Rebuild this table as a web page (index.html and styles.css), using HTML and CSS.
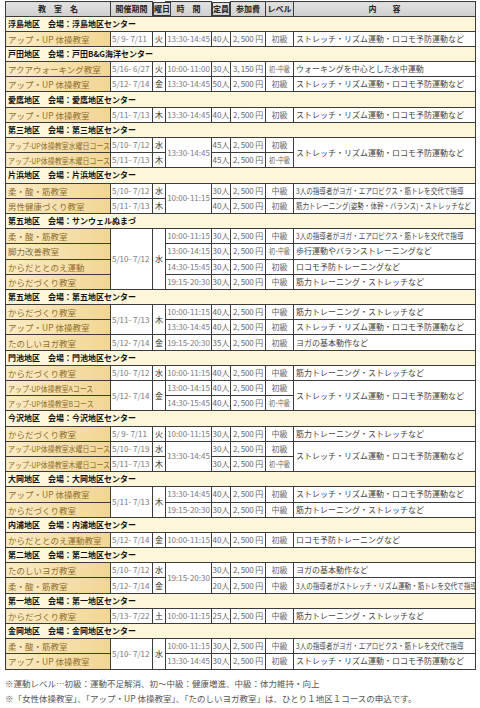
FILE: index.html
```html
<!DOCTYPE html>
<html lang="ja">
<head>
<meta charset="utf-8">
<title>教室一覧</title>
<link rel="stylesheet" href="styles.css">
</head>
<body>
<div class="wrap">
<table class="schedule">
<colgroup>
<col class="c-name"><col class="c-period"><col class="c-day"><col class="c-time"><col class="c-cap"><col class="c-fee"><col class="c-level"><col class="c-desc">
</colgroup>
<thead>
<tr class="head">
<th>教　室　名</th><th>開催期間</th><th class="sq">曜日</th><th>時　間</th><th class="sq">定員</th><th>参加費</th><th>レベル</th><th>内　　容</th>
</tr>
</thead>
<tbody>
<tr class="area"><td colspan="8">浮島地区　会場：浮島地区センター</td></tr>
<tr><td class="name">アップ・UP 体操教室</td><td class="period">5/ 9- 7/11</td><td class="day">火</td><td class="time">13:30-14:45</td><td class="cap">40人</td><td class="fee">2, 500 円</td><td class="level">初級</td><td class="desc">ストレッチ・リズム運動・ロコモ予防運動など</td></tr>

<tr class="area"><td colspan="8">戸田地区　会場：戸田B&amp;G海洋センター</td></tr>
<tr><td class="name">アクアウォーキング教室</td><td class="period">5/16- 6/27</td><td class="day">火</td><td class="time">10:00-11:00</td><td class="cap">30人</td><td class="fee">3, 150 円</td><td class="level"><span class="sq">初~中級</span></td><td class="desc">ウォーキングを中心とした水中運動</td></tr>
<tr><td class="name">アップ・UP 体操教室</td><td class="period">5/12- 7/14</td><td class="day">金</td><td class="time">13:30-14:45</td><td class="cap">50人</td><td class="fee">2, 500 円</td><td class="level">初級</td><td class="desc">ストレッチ・リズム運動・ロコモ予防運動など</td></tr>

<tr class="area"><td colspan="8">愛鷹地区　会場：愛鷹地区センター</td></tr>
<tr><td class="name">アップ・UP 体操教室</td><td class="period">5/11- 7/13</td><td class="day">木</td><td class="time">13:30-14:45</td><td class="cap">40人</td><td class="fee">2, 500 円</td><td class="level">初級</td><td class="desc">ストレッチ・リズム運動・ロコモ予防運動など</td></tr>

<tr class="area"><td colspan="8">第三地区　会場：第三地区センター</td></tr>
<tr><td class="name"><span class="sq">アップ-UP体操教室水曜日コース</span></td><td class="period">5/10- 7/12</td><td class="day">水</td><td class="time" rowspan="2">13:30-14:45</td><td class="cap">45人</td><td class="fee">2, 500 円</td><td class="level">初級</td><td class="desc" rowspan="2">ストレッチ・リズム運動・ロコモ予防運動など</td></tr>
<tr><td class="name"><span class="sq">アップ-UP体操教室木曜日コース</span></td><td class="period">5/11- 7/13</td><td class="day">木</td><td class="cap">45人</td><td class="fee">2, 500 円</td><td class="level"><span class="sq">初~中級</span></td></tr>

<tr class="area"><td colspan="8">片浜地区　会場：片浜地区センター</td></tr>
<tr><td class="name">柔・酸・筋教室</td><td class="period">5/10- 7/12</td><td class="day">水</td><td class="time" rowspan="2">10:00-11:15</td><td class="cap">30人</td><td class="fee">2, 500 円</td><td class="level">中級</td><td class="desc"><span class="sq">3人の指導者がヨガ・エアロビクス・筋トレを交代で指導</span></td></tr>
<tr><td class="name">男性健康づくり教室</td><td class="period">5/11- 7/13</td><td class="day">木</td><td class="cap">40人</td><td class="fee">2, 500 円</td><td class="level">初級</td><td class="desc"><span class="sq">筋力トレーニング(姿勢・体幹・バランス)・ストレッチなど</span></td></tr>

<tr class="area"><td colspan="8">第五地区　会場：サンウェルぬまづ</td></tr>
<tr><td class="name">柔・酸・筋教室</td><td class="period" rowspan="4">5/10- 7/12</td><td class="day" rowspan="4">水</td><td class="time">10:00-11:15</td><td class="cap">30人</td><td class="fee">2, 500 円</td><td class="level">中級</td><td class="desc"><span class="sq">3人の指導者がヨガ・エアロビクス・筋トレを交代で指導</span></td></tr>
<tr><td class="name">脚力改善教室</td><td class="time">13:00-14:15</td><td class="cap">30人</td><td class="fee">2, 500 円</td><td class="level"><span class="sq">初~中級</span></td><td class="desc">歩行運動やバランストレーニングなど</td></tr>
<tr><td class="name">からだととのえ運動</td><td class="time">14:30-15:45</td><td class="cap">30人</td><td class="fee">2, 500 円</td><td class="level">初級</td><td class="desc">ロコモ予防トレーニングなど</td></tr>
<tr><td class="name">からだづくり教室</td><td class="time">19:15-20:30</td><td class="cap">30人</td><td class="fee">2, 500 円</td><td class="level">中級</td><td class="desc">筋力トレーニング・ストレッチなど</td></tr>

<tr class="area"><td colspan="8">第五地区　会場：第五地区センター</td></tr>
<tr><td class="name">からだづくり教室</td><td class="period" rowspan="2">5/11- 7/13</td><td class="day" rowspan="2">木</td><td class="time">10:00-11:15</td><td class="cap">40人</td><td class="fee">2, 500 円</td><td class="level">中級</td><td class="desc">筋力トレーニング・ストレッチなど</td></tr>
<tr><td class="name">アップ・UP 体操教室</td><td class="time">13:30-14:45</td><td class="cap">40人</td><td class="fee">2, 500 円</td><td class="level">初級</td><td class="desc">ストレッチ・リズム運動・ロコモ予防運動など</td></tr>
<tr><td class="name">たのしいヨガ教室</td><td class="period">5/12- 7/14</td><td class="day">金</td><td class="time">19:15-20:30</td><td class="cap">35人</td><td class="fee">2, 500 円</td><td class="level">初級</td><td class="desc">ヨガの基本動作など</td></tr>

<tr class="area"><td colspan="8">門池地区　会場：門池地区センター</td></tr>
<tr><td class="name">からだづくり教室</td><td class="period">5/10- 7/12</td><td class="day">水</td><td class="time">10:00-11:15</td><td class="cap">40人</td><td class="fee">2, 500 円</td><td class="level">中級</td><td class="desc">筋力トレーニング・ストレッチなど</td></tr>
<tr><td class="name"><span class="sq">アップ-UP体操教室Aコース</span></td><td class="period" rowspan="2">5/12- 7/14</td><td class="day" rowspan="2">金</td><td class="time">13:00-14:15</td><td class="cap">40人</td><td class="fee">2, 500 円</td><td class="level">初級</td><td class="desc" rowspan="2">ストレッチ・リズム運動・ロコモ予防運動など</td></tr>
<tr><td class="name"><span class="sq">アップ-UP体操教室Bコース</span></td><td class="time">14:30-15:45</td><td class="cap">40人</td><td class="fee">2, 500 円</td><td class="level"><span class="sq">初~中級</span></td></tr>

<tr class="area"><td colspan="8">今沢地区　会場：今沢地区センター</td></tr>
<tr><td class="name">からだづくり教室</td><td class="period">5/ 9- 7/11</td><td class="day">火</td><td class="time">10:00-11:15</td><td class="cap">30人</td><td class="fee">2, 500 円</td><td class="level">中級</td><td class="desc">筋力トレーニング・ストレッチなど</td></tr>
<tr><td class="name"><span class="sq">アップ-UP体操教室水曜日コース</span></td><td class="period">5/10- 7/19</td><td class="day">水</td><td class="time" rowspan="2">13:30-14:45</td><td class="cap">30人</td><td class="fee">2, 500 円</td><td class="level">初級</td><td class="desc" rowspan="2">ストレッチ・リズム運動・ロコモ予防運動など</td></tr>
<tr><td class="name"><span class="sq">アップ-UP体操教室木曜日コース</span></td><td class="period">5/11- 7/13</td><td class="day">木</td><td class="cap">30人</td><td class="fee">2, 500 円</td><td class="level"><span class="sq">初~中級</span></td></tr>

<tr class="area"><td colspan="8">大岡地区　会場：大岡地区センター</td></tr>
<tr><td class="name">アップ・UP 体操教室</td><td class="period" rowspan="2">5/11- 7/13</td><td class="day" rowspan="2">木</td><td class="time">13:30-14:45</td><td class="cap">40人</td><td class="fee">2, 500 円</td><td class="level">初級</td><td class="desc">ストレッチ・リズム運動・ロコモ予防運動など</td></tr>
<tr><td class="name">からだづくり教室</td><td class="time">19:15-20:30</td><td class="cap">30人</td><td class="fee">2, 500 円</td><td class="level">中級</td><td class="desc">筋力トレーニング・ストレッチなど</td></tr>

<tr class="area"><td colspan="8">内浦地区　会場：内浦地区センター</td></tr>
<tr><td class="name">からだととのえ運動教室</td><td class="period">5/12- 7/14</td><td class="day">金</td><td class="time">10:00-11:15</td><td class="cap">40人</td><td class="fee">2, 500 円</td><td class="level">初級</td><td class="desc">ロコモ予防トレーニングなど</td></tr>

<tr class="area"><td colspan="8">第二地区　会場：第二地区センター</td></tr>
<tr><td class="name">たのしいヨガ教室</td><td class="period">5/10- 7/12</td><td class="day">水</td><td class="time" rowspan="2">19:15-20:30</td><td class="cap">30人</td><td class="fee">2, 500 円</td><td class="level">初級</td><td class="desc">ヨガの基本動作など</td></tr>
<tr><td class="name">柔・酸・筋教室</td><td class="period">5/12- 7/14</td><td class="day">金</td><td class="cap">20人</td><td class="fee">2, 500 円</td><td class="level">中級</td><td class="desc"><span class="sq">3人の指導者がストレッチ・リズム運動・筋トレを交代で指導</span></td></tr>

<tr class="area"><td colspan="8">第一地区　会場：第一地区センター</td></tr>
<tr><td class="name">からだづくり教室</td><td class="period">5/13- 7/22</td><td class="day">土</td><td class="time">10:00-11:15</td><td class="cap">25人</td><td class="fee">2, 500 円</td><td class="level">中級</td><td class="desc">筋力トレーニング・ストレッチなど</td></tr>

<tr class="area"><td colspan="8">金岡地区　会場：金岡地区センター</td></tr>
<tr><td class="name">柔・酸・筋教室</td><td class="period" rowspan="2">5/10- 7/12</td><td class="day" rowspan="2">水</td><td class="time">10:00-11:15</td><td class="cap">30人</td><td class="fee">2, 500 円</td><td class="level">中級</td><td class="desc"><span class="sq">3人の指導者がヨガ・エアロビクス・筋トレを交代で指導</span></td></tr>
<tr><td class="name">アップ・UP 体操教室</td><td class="time">13:30-14:45</td><td class="cap">30人</td><td class="fee">2, 500 円</td><td class="level">初級</td><td class="desc">ストレッチ・リズム運動・ロコモ予防運動など</td></tr>
</tbody>
</table>
<div class="notes">
<p>※運動レベル…初級：運動不足解消、初～中級：健康増進、中級：体力維持・向上</p>
<p>※「女性体操教室」、「アップ・UP 体操教室」、「たのしいヨガ教室」は、ひとり１地区１コースの申込です。</p>
</div>
</div>
</body>
</html>
```
FILE: styles.css
```css
html, body {
  margin: 0;
  padding: 0;
  background: #ffffff;
}
body {
  font-family: "Noto Sans CJK JP", "Noto Sans", sans-serif;
}
.wrap {
  padding: 1px 5px 0 5px;
}
.schedule {
  border-collapse: collapse;
  table-layout: fixed;
  width: 470px;
  font-size: 8px;
}
.c-name { width: 105px; }
.c-period { width: 42px; }
.c-day { width: 13px; }
.c-time { width: 46px; }
.c-cap { width: 19px; }
.c-fee { width: 35px; }
.c-level { width: 28px; }
.c-desc { width: 182px; }

.schedule th,
.schedule td {
  border: 1px solid #3c3c3c;
  padding: 0 2px;
  white-space: nowrap;
  overflow: hidden;
  line-height: 12px;
  vertical-align: middle;
}
.schedule tbody tr {
  height: 15.2px;
}
.head th {
  height: 12px;
  background: linear-gradient(#e2e2e2, #cfcfcf);
  color: #222;
  font-weight: bold;
  text-align: center;
  padding: 0;
}
.area td {
  background: #fdf6da;
  color: #111;
  font-weight: bold;
  padding-left: 2px;
}
.name {
  background: linear-gradient(to right, #fbebc6, #f1d593);
  color: #8f6f2e;
  font-size: 8.5px;
}
.period {
  color: #7a7a7a;
  padding: 0 1px !important;
}
.day {
  color: #333;
  text-align: center;
  padding: 0 !important;
}
.time {
  color: #7a7a7a;
  text-align: center;
  padding: 0 1px !important;
}
.cap {
  color: #666;
  text-align: center;
  padding: 0 !important;
}
.fee {
  color: #666;
  text-align: center;
  padding: 0 !important;
  letter-spacing: -0.2px;
}
.level {
  color: #666;
  text-align: center;
  padding: 0 !important;
}
.desc {
  color: #444;
  padding-left: 2px;
}
.sq {
  display: inline-block;
  transform: scaleX(0.84);
  transform-origin: left center;
}
.name .sq {
  font-size: 8px;
  transform: scaleX(0.87);
}
.desc .sq {
  transform: scaleX(0.82);
}
.level .sq {
  font-size: 7.5px;
  transform-origin: center center;
  transform: scaleX(0.78);
}
.head .sq {
  transform: none;
}
.notes {
  margin-top: 6px;
  color: #555;
  font-size: 8.5px;
}
.notes p {
  margin: 0;
  line-height: 15px;
}
```
